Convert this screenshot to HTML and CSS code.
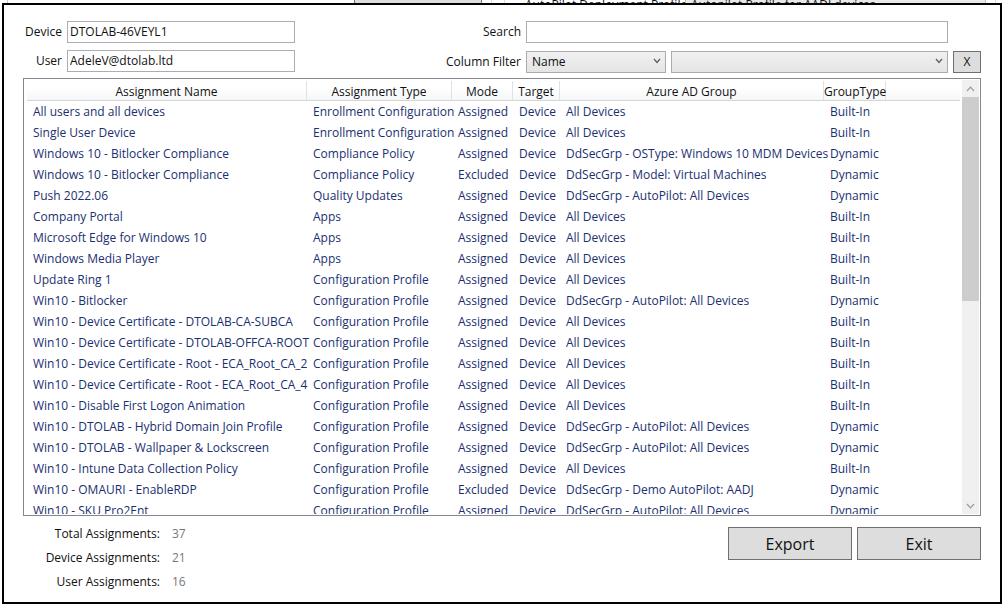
FILE: index.html
```html
<!DOCTYPE html>
<html lang="en">
<head>
<meta charset="utf-8">
<meta name="viewport" content="width=device-width, initial-scale=1">
<title>Assignments</title>
<link rel="stylesheet" href="styles.css">
</head>
<body>
<div class="backdrop" aria-hidden="true">
  <span class="backdrop-edge"></span>
  <span class="backdrop-button"></span>
  <span class="backdrop-frame"></span>
  <span class="backdrop-label">AutoPilot Deployment Profile</span>
  <span class="backdrop-combo">Autopilot Profile for AADJ devices</span>
  <span class="backdrop-end"></span>
</div>
<main class="dialog">
  <form class="top">
    <div class="identity">
      <label for="device">Device</label>
      <input id="device" class="box" type="text" value="DTOLAB-46VEYL1">
      <label for="user">User</label>
      <input id="user" class="box" type="text" value="AdeleV@dtolab.ltd">
    </div>
    <div class="filters">
      <label for="search">Search</label>
      <input id="search" class="box" type="text">
      <label for="column" class="filter-label">Column Filter</label>
      <div class="filter-row">
        <div class="combo combo-column">
          <select id="column"><option>Name</option></select>
          <svg class="chevron" viewBox="0 0 8 6"><path d="M1 1 L4 4.4 L7 1"/></svg>
        </div>
        <div class="combo combo-value">
          <select aria-label="Filter value"><option></option></select>
          <svg class="chevron" viewBox="0 0 8 6"><path d="M1 1 L4 4.4 L7 1"/></svg>
        </div>
      </div>
      <button type="button" class="button clear">X</button>
    </div>
  </form>

  <section class="list">
    <div class="list-view">
      <table>
        <colgroup>
          <col class="c-name"><col class="c-type"><col class="c-mode"><col class="c-target"><col class="c-group"><col class="c-gtype"><col>
        </colgroup>
        <thead>
          <tr><th>Assignment Name</th><th>Assignment Type</th><th>Mode</th><th>Target</th><th>Azure AD Group</th><th>GroupType</th><td class="filler"></td></tr>
        </thead>
        <tbody>
          <tr><td>All users and all devices</td><td>Enrollment Configuration</td><td>Assigned</td><td>Device</td><td>All Devices</td><td>Built-In</td></tr>
          <tr><td>Single User Device</td><td>Enrollment Configuration</td><td>Assigned</td><td>Device</td><td>All Devices</td><td>Built-In</td></tr>
          <tr><td>Windows 10 - Bitlocker Compliance</td><td>Compliance Policy</td><td>Assigned</td><td>Device</td><td>DdSecGrp - OSType: Windows 10 MDM Devices</td><td>Dynamic</td></tr>
          <tr><td>Windows 10 - Bitlocker Compliance</td><td>Compliance Policy</td><td>Excluded</td><td>Device</td><td>DdSecGrp - Model: Virtual Machines</td><td>Dynamic</td></tr>
          <tr><td>Push 2022.06</td><td>Quality Updates</td><td>Assigned</td><td>Device</td><td>DdSecGrp - AutoPilot: All Devices</td><td>Dynamic</td></tr>
          <tr><td>Company Portal</td><td>Apps</td><td>Assigned</td><td>Device</td><td>All Devices</td><td>Built-In</td></tr>
          <tr><td>Microsoft Edge for Windows 10</td><td>Apps</td><td>Assigned</td><td>Device</td><td>All Devices</td><td>Built-In</td></tr>
          <tr><td>Windows Media Player</td><td>Apps</td><td>Assigned</td><td>Device</td><td>All Devices</td><td>Built-In</td></tr>
          <tr><td>Update Ring 1</td><td>Configuration Profile</td><td>Assigned</td><td>Device</td><td>All Devices</td><td>Built-In</td></tr>
          <tr><td>Win10 - Bitlocker</td><td>Configuration Profile</td><td>Assigned</td><td>Device</td><td>DdSecGrp - AutoPilot: All Devices</td><td>Dynamic</td></tr>
          <tr><td>Win10 - Device Certificate - DTOLAB-CA-SUBCA</td><td>Configuration Profile</td><td>Assigned</td><td>Device</td><td>All Devices</td><td>Built-In</td></tr>
          <tr><td>Win10 - Device Certificate - DTOLAB-OFFCA-ROOT</td><td>Configuration Profile</td><td>Assigned</td><td>Device</td><td>All Devices</td><td>Built-In</td></tr>
          <tr><td>Win10 - Device Certificate - Root - ECA_Root_CA_2</td><td>Configuration Profile</td><td>Assigned</td><td>Device</td><td>All Devices</td><td>Built-In</td></tr>
          <tr><td>Win10 - Device Certificate - Root - ECA_Root_CA_4</td><td>Configuration Profile</td><td>Assigned</td><td>Device</td><td>All Devices</td><td>Built-In</td></tr>
          <tr><td>Win10 - Disable First Logon Animation</td><td>Configuration Profile</td><td>Assigned</td><td>Device</td><td>All Devices</td><td>Built-In</td></tr>
          <tr><td>Win10 - DTOLAB - Hybrid Domain Join Profile</td><td>Configuration Profile</td><td>Assigned</td><td>Device</td><td>DdSecGrp - AutoPilot: All Devices</td><td>Dynamic</td></tr>
          <tr><td>Win10 - DTOLAB - Wallpaper &amp; Lockscreen</td><td>Configuration Profile</td><td>Assigned</td><td>Device</td><td>DdSecGrp - AutoPilot: All Devices</td><td>Dynamic</td></tr>
          <tr><td>Win10 - Intune Data Collection Policy</td><td>Configuration Profile</td><td>Assigned</td><td>Device</td><td>All Devices</td><td>Built-In</td></tr>
          <tr><td>Win10 - OMAURI - EnableRDP</td><td>Configuration Profile</td><td>Excluded</td><td>Device</td><td>DdSecGrp - Demo AutoPilot: AADJ</td><td>Dynamic</td></tr>
          <tr><td>Win10 - SKU Pro2Ent</td><td>Configuration Profile</td><td>Assigned</td><td>Device</td><td>DdSecGrp - AutoPilot: All Devices</td><td>Dynamic</td></tr>
        </tbody>
      </table>
    </div>
    <div class="scrollbar">
      <button type="button" class="arrow" aria-label="Scroll up"><svg viewBox="0 0 9 6"><path d="M1 5 L4.5 1.2 L8 5"/></svg></button>
      <div class="track"><div class="thumb"></div></div>
      <button type="button" class="arrow" aria-label="Scroll down"><svg viewBox="0 0 9 6"><path d="M1 1 L4.5 4.8 L8 1"/></svg></button>
    </div>
  </section>

  <footer class="bottom">
    <dl class="totals">
      <dt>Total Assignments:</dt><dd>37</dd>
      <dt>Device Assignments:</dt><dd>21</dd>
      <dt>User Assignments:</dt><dd>16</dd>
    </dl>
    <div class="actions">
      <button type="button" class="button action">Export</button>
      <button type="button" class="button action">Exit</button>
    </div>
  </footer>
</main>
</body>
</html>
```
FILE: styles.css
```css
* { box-sizing: border-box; }

body {
  margin: 0;
  height: 100vh;
  display: flex;
  flex-direction: column;
  padding: 0 2px 2px;
  background: #fff;
  color: #111;
  font: 12px/16px "Open Sans", "Noto Sans", sans-serif;
}

input, select, button { font: inherit; color: inherit; margin: 0; }

/* Sliver of the parent window above the dialog */
.backdrop {
  flex: none;
  height: 3px;
  overflow: hidden;
  display: flex;
  align-items: flex-start;
  white-space: nowrap;
  line-height: 10px;
}
.backdrop > span { height: 14px; flex: none; }
.backdrop-edge { width: 6px; border-right: 1px solid #ccc; }
.backdrop-button { width: 128px; margin-left: 346px; background: #ddd; border: solid #707070; border-width: 0 1px; }
.backdrop-frame { width: 14px; margin-left: 9px; border: solid #ddd; border-width: 0 1px; }
.backdrop-label { width: 160px; margin-left: 20px; }
.backdrop-combo { width: 301px; padding-left: 5px; background: #e9e9e9; border: solid #bbb; border-width: 0 1px; }
.backdrop-end { width: 10px; border-right: 1px solid #ddd; }

.dialog {
  flex: 1;
  min-height: 0;
  display: flex;
  flex-direction: column;
  padding: 16px 19px 8px;
  border: 2px solid #000;
  background: #fff;
}

.top {
  display: flex;
  justify-content: space-between;
  height: 57px;
  flex: none;
}

.identity {
  display: grid;
  grid-template-columns: 39px 228px;
  grid-auto-rows: 22px;
  gap: 7px 5px;
  align-items: center;
  align-content: start;
  text-align: right;
}

.filters {
  display: grid;
  grid-template-columns: 80px minmax(0, 422px) 28px;
  grid-auto-rows: 22px;
  gap: 8px 5px;
  align-items: center;
  align-content: start;
  text-align: right;
  flex: 0 1 540px;
}

.box {
  width: 100%;
  height: 22px;
  padding: 0 2px 2px;
  border: 1px solid #abadb3;
  background: #fff;
  outline: 0;
}

.filter-label { grid-column: 1; white-space: nowrap; }
.filter-row { display: flex; gap: 5px; }
.combo { position: relative; height: 22px; }
.combo-column { flex: 0 0 140px; }
.combo-value { flex: 1; }
.combo select {
  appearance: none;
  display: block;
  width: 100%;
  height: 22px;
  padding: 0 20px 0 5px;
  border: 1px solid #acacac;
  border-radius: 0;
  background: linear-gradient(#f0f0f0, #e5e5e5);
}
.chevron {
  position: absolute;
  right: 5px;
  top: 7px;
  width: 8px;
  height: 6px;
  fill: none;
  stroke: #606060;
  stroke-width: 1.3;
  pointer-events: none;
}

.button {
  padding: 0;
  border: 1px solid #707070;
  background: #ddd;
}
.clear { height: 22px; }

.list {
  flex: 1;
  min-height: 0;
  display: flex;
  gap: 2px;
  padding: 1px;
  border: 1px solid #828790;
}
.list-view { flex: 1; min-width: 0; overflow: hidden; padding: 1px 0 0 2px; }

table {
  width: 100%;
  table-layout: fixed;
  border-collapse: separate;
  border-spacing: 0;
}
.c-name { width: 280px; }
.c-type { width: 145px; }
.c-mode { width: 61px; }
.c-target { width: 47px; }
.c-group { width: 264px; }
.c-gtype { width: 62px; }

thead tr { height: 20px; }
th, .filler {
  padding: 2px 0 0;
  font-weight: 400;
  text-align: center;
  background: linear-gradient(#fff 40%, #f5f6f7);
  border-bottom: 1px solid #d5d5d5;
}
th { border-right: 1px solid #dee2e6; }
tbody tr { height: 21px; }
tbody td {
  padding: 0 0 0 6px;
  white-space: nowrap;
  color: #1b2f70;
}

.scrollbar {
  flex: none;
  width: 17px;
  display: flex;
  flex-direction: column;
  background: #f0f0f0;
}
.arrow {
  height: 17px;
  padding: 0;
  border: 0;
  background: none;
  display: grid;
  place-items: center;
}
.arrow svg { width: 9px; height: 6px; fill: none; stroke: #999; stroke-width: 1.2; }
.track { flex: 1; }
.thumb { height: 51%; background: #cdcdcd; }

.bottom {
  flex: none;
  display: flex;
  justify-content: space-between;
  align-items: flex-start;
  padding-top: 6px;
}
.totals {
  display: grid;
  grid-template-columns: 137px auto;
  grid-auto-rows: 24px;
  column-gap: 12px;
  margin: 0;
  line-height: 24px;
  text-align: right;
}
.totals dd { margin: 0; color: #777; }
.actions { display: flex; gap: 5px; padding-top: 5px; }
.action { width: 124px; height: 33px; font-size: 16px; }
```
